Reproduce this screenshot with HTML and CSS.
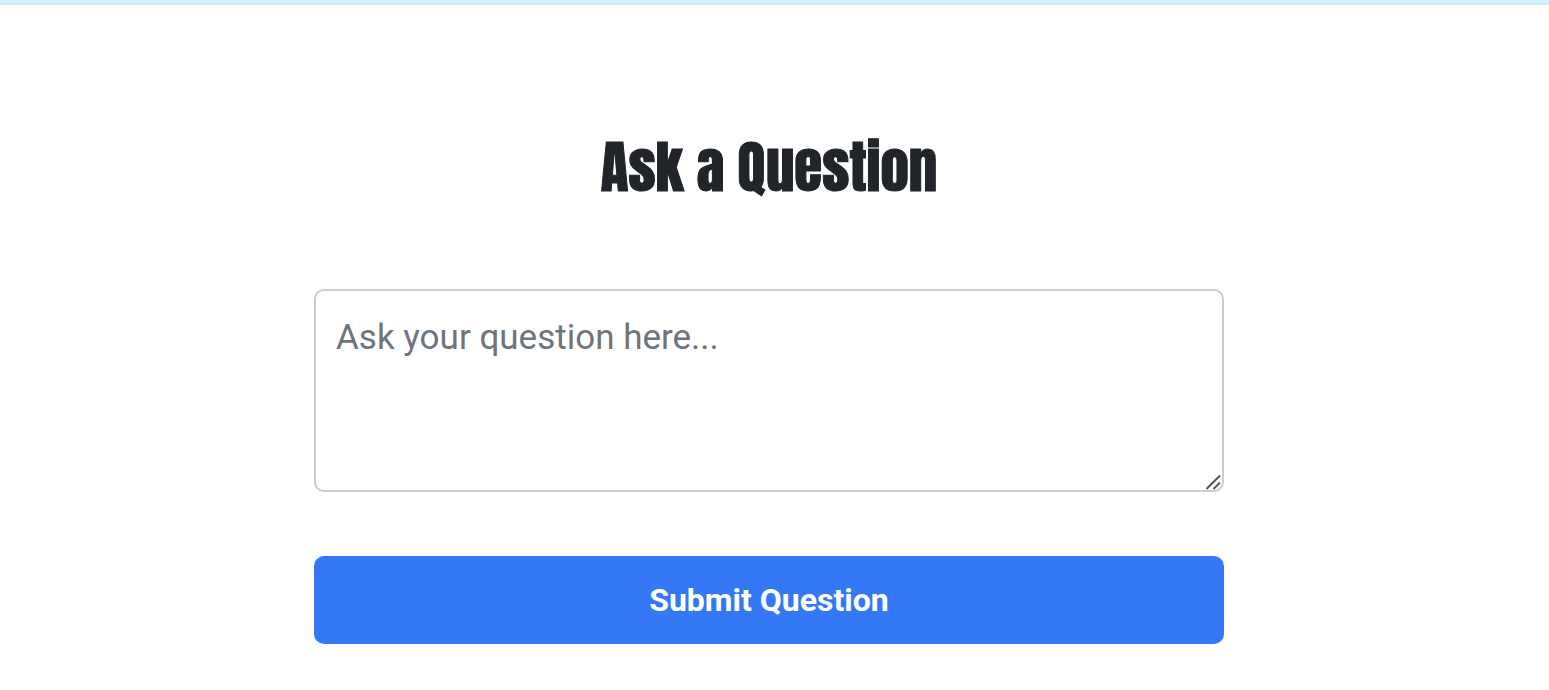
FILE: index.html
```
<!DOCTYPE html>
<html lang="en">
<head>
  <meta charset="utf-8">
  <meta name="viewport" content="width=device-width, initial-scale=1">
  <title>Ask a Question</title>
  <link rel="stylesheet" href="styles.css">
</head>
<body>
  <header class="top-strip"></header>
  <main class="page">
    <h1 class="title" id="ask-title">Ask a Question</h1>
    <form class="ask-form">
      <div class="field">
        <textarea class="question" name="question" aria-labelledby="ask-title" placeholder="Ask your question here..."></textarea>
        <svg class="grip" viewBox="0 0 16 16" aria-hidden="true"><path d="M.5 15 14 1.500M7.500 15 14 8.500"/></svg>
      </div>
      <button class="submit" type="submit">Submit Question</button>
    </form>
  </main>
</body>
</html>
```
FILE: styles.css
```
* {
  box-sizing: border-box;
}

body {
  margin: 0;
  background: #fff;
  color: #212529;
  font-family: Roboto, sans-serif;
}

.top-strip {
  height: 5px;
  background: #d5f2fa;
  border-bottom: 2px solid #c3eef5;
}

.page {
  padding: 120px 11px 46px 0;
}

.title {
  margin: 0 0 80px;
  font-family: Anton, Impact, sans-serif;
  font-size: 57px;
  font-weight: 400;
  line-height: 84px;
  text-align: center;
  -webkit-text-stroke: 1px #212529;
}

.ask-form {
  display: flex;
  flex-direction: column;
  gap: 64px;
  max-width: 910px;
  margin: 0 auto;
}

.field {
  position: relative;
  display: flex;
}

.question {
  width: 100%;
  height: 203px;
  padding: 20px;
  border: 2px solid #ccc;
  border-radius: 10px;
  background: #fff;
  color: #212529;
  font: 400 35px/53px Roboto, sans-serif;
  resize: vertical;
  outline: none;
}

.question::placeholder {
  color: #6c757d;
  opacity: 1;
}

.question::-webkit-resizer {
  background: transparent;
}

.grip {
  position: absolute;
  right: 2px;
  bottom: 2px;
  width: 16px;
  height: 16px;
  fill: none;
  stroke: #555;
  stroke-width: 2;
  pointer-events: none;
}

.submit {
  height: 88px;
  border: 0;
  border-radius: 10px;
  background: #3478f6;
  color: #fff;
  font: 700 32px/48px Roboto, sans-serif;
  cursor: pointer;
}
```
